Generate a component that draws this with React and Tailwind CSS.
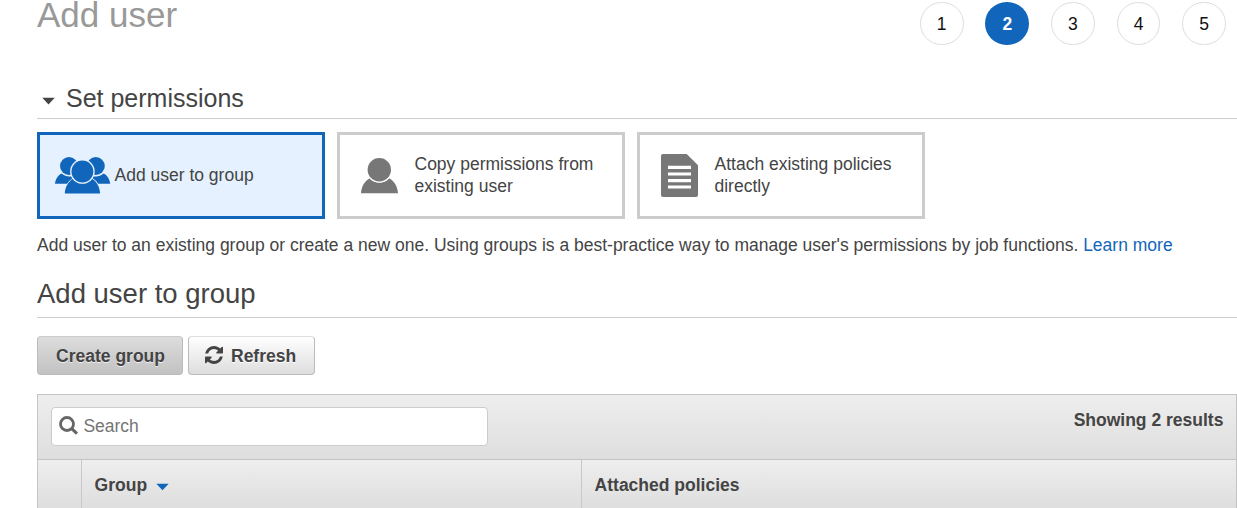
const STEPS = [1, 2, 3, 4, 5];

function GroupIcon() {
  return (
    <svg className="block shrink-0" width="56" height="38" viewBox="0 0 56 38" fill="#1166bb">
      <circle cx="14" cy="9" r="9" />
      <circle cx="40.8" cy="9" r="9" />
      <path d="M0 26.8C0.6 22.5 2.6 18.4 6.6 16.6C9.8 19.4 13.4 20.2 18 19.2L17 26.8Z" />
      <path d="M55.2 26.8C54.6 22.5 52.6 18.4 48.6 16.6C45.4 19.4 41.8 20.2 37.2 19.2L38.2 26.8Z" />
      <path d="M9.8 36.4C10.1 30.7 12.7 25.2 18 21.8C23.6 27.6 31.6 27.6 37 21.8C42.3 25.1 44.8 30.7 45.1 36.4Z" stroke="#e5f1fe" strokeWidth="1.6" paintOrder="stroke" />
      <circle cx="27.4" cy="14.5" r="12.3" fill="#e5f1fe" />
      <circle cx="27.4" cy="14.5" r="10.9" />
    </svg>
  );
}

function PersonIcon() {
  return (
    <svg className="block shrink-0" width="37" height="36" viewBox="0 0 37 36" fill="#777">
      <path d="M0 35.2C0.4 28.8 3.2 23.4 8.8 20.2C14.5 26 22.5 26 28.2 20.2C33.7 23.4 36.6 28.8 37 35.2Z" />
      <circle cx="18.3" cy="11.7" r="13" fill="#fff" />
      <circle cx="18.3" cy="11.7" r="11.7" />
    </svg>
  );
}

function DocumentIcon() {
  return (
    <svg className="block shrink-0" width="37" height="43" viewBox="0 0 37 43">
      <path d="M2 0H25.7L37 11.2V41Q37 43 35 43H2Q0 43 0 41V2Q0 0 2 0Z" fill="#777" />
      <path d="M7 13.4H30M7 20H30M7 26.6H30M7 33H30" stroke="#fff" strokeWidth="3.2" />
    </svg>
  );
}

function Card({ active, icon, children }) {
  return (
    <div
      className={
        active
          ? "flex h-[87px] w-[288px] items-center border-3 border-[#1166bb] bg-[#e5f1fe]"
          : "flex h-[87px] w-[288px] items-center border-3 border-[#ccc] bg-white"
      }
    >
      <div className={active ? "w-[74.5px] shrink-0 pl-[15px]" : "w-[74.5px] shrink-0 pl-[21px]"}>{icon}</div>
      <div className="pb-px leading-[22px]">{children}</div>
    </div>
  );
}

export default function App() {
  return (
    <div className="h-[508px] overflow-hidden bg-white pl-[37px] font-['Liberation_Sans',Arial,sans-serif] text-[17.5px] leading-[22px] text-[#444]">
      <header className="flex h-[78px] items-start justify-between">
        <h1 className="text-[35px] leading-[30px] text-[#999]">Add user</h1>
        <ol className="flex gap-[21.875px] pt-[1.5px] pr-[11px]">
          {STEPS.map((n) => (
            <li
              key={n}
              className={
                n === 2
                  ? "flex h-[43.5px] w-[43.75px] items-center justify-center rounded-full bg-[#1166bb] pt-[1.5px] font-bold text-white"
                  : "flex h-[43.5px] w-[43.75px] items-center justify-center rounded-full border border-[#ddd] pt-[1.5px] text-[#111]"
              }
            >
              {n}
            </li>
          ))}
        </ol>
      </header>

      <h2 className="flex h-[41px] items-center border-b border-[#ccc] text-[25px] leading-[30px]">
        <svg className="mt-[5px] mr-[11px] ml-[5px]" width="13" height="8" viewBox="0 0 13 8" fill="#444">
          <path d="M0.3 0.8H12.7L6.5 7.5Z" />
        </svg>
        Set permissions
      </h2>

      <div className="flex gap-3 pt-[13px]">
        <Card active icon={<GroupIcon />}>Add user to group</Card>
        <Card icon={<PersonIcon />}>
          Copy permissions from
          <br />
          existing user
        </Card>
        <Card icon={<DocumentIcon />}>
          Attach existing policies
          <br />
          directly
        </Card>
      </div>

      <p className="pt-[15px] whitespace-nowrap">
        Add user to an existing group or create a new one. Using groups is a best-practice way to manage user's
        permissions by job functions. <a className="text-[#1166bb]">Learn more</a>
      </p>

      <h2 className="mt-[22px] h-[40px] border-b border-[#ccc] text-[27.5px] leading-[32px]">Add user to group</h2>

      <div className="flex gap-[5px] pt-[18px] font-bold">
        <button className="h-[39px] w-[146px] rounded-[4px] border border-[#bbb] border-t-[#ccc] bg-linear-to-b from-[#ddd] to-[#c2c2c2] pl-px text-shadow-[0_1px_0_#eee]">
          Create group
        </button>
        <button className="flex h-[39px] w-[127px] items-center rounded-[4px] border border-[#bbb] border-t-[#ddd] bg-linear-to-b from-white to-[#ddd] pl-[16px] text-shadow-[0_1px_0_#fff]">
          <svg className="mr-[8px] mb-[2px] shrink-0" width="18" height="18" viewBox="0 0 1536 1536" fill="#444">
            <path d="M1511 928q0 5-1 7-64 268-268 434.500T764 1536q-146 0-282.500-55T238 1324l-129 129q-19 19-45 19t-45-19-19-45V960q0-26 19-45t45-19h448q26 0 45 19t19 45-19 45l-137 137q71 66 161 102t187 36q134 0 250-65t186-179q11-17 53-117 8-23 30-23h192q13 0 22.500 9.500t9.500 22.500zm25-800v448q0 26-19 45t-45 19h-448q-26 0-45-19t-19-45 19-45l138-138Q969 256 768 256q-134 0-250 65T332 500q-11 17-53 117-8 23-30 23H50q-13 0-22.500-9.500T18 608v-7q65-268 270-434.500T768 0q146 0 284 55.500T1297 212l130-129q19-19 45-19t45 19 19 45z" />
          </svg>
          Refresh
        </button>
      </div>

      <section className="mt-[19px] border border-[#c4c4c4]">
        <div className="flex h-[65px] justify-between border-b border-[#c4c4c4] bg-linear-to-b from-[#eee] to-[#dedede] pt-[12px] pr-[12.6px] pl-[13px]">
          <div className="flex h-[39px] w-[437px] items-center rounded-[4px] border border-[#ccc] bg-white pb-[2px] pl-[7px] text-[#757575]">
            <svg className="mr-[4.4px] mb-px" width="20" height="19" viewBox="0 0 20 19" fill="none" stroke="#666">
              <circle cx="8" cy="8" r="6.5" strokeWidth="2.8" />
              <path d="M12.7 12.7L18 17.7" strokeWidth="3.1" />
            </svg>
            Search
          </div>
          <div className="pt-[2px] font-bold">Showing 2 results</div>
        </div>
        <div className="flex h-[51px] bg-linear-to-b from-[#eee] to-[#ddd] leading-[50px] font-bold">
          <div className="w-[44px] border-r border-[#c8c8c8]" />
          <div className="flex w-[500px] items-center border-r border-[#c8c8c8] pb-[2px] pl-[12.6px]">
            Group
            <svg className="mt-[4px] ml-[9.4px]" width="13" height="8" viewBox="0 0 13 8" fill="#1166bb">
              <path d="M0.3 0.7H12.7L6.5 7.3Z" />
            </svg>
          </div>
          <div className="pl-[12.6px]">Attached policies</div>
        </div>
      </section>
    </div>
  );
}
